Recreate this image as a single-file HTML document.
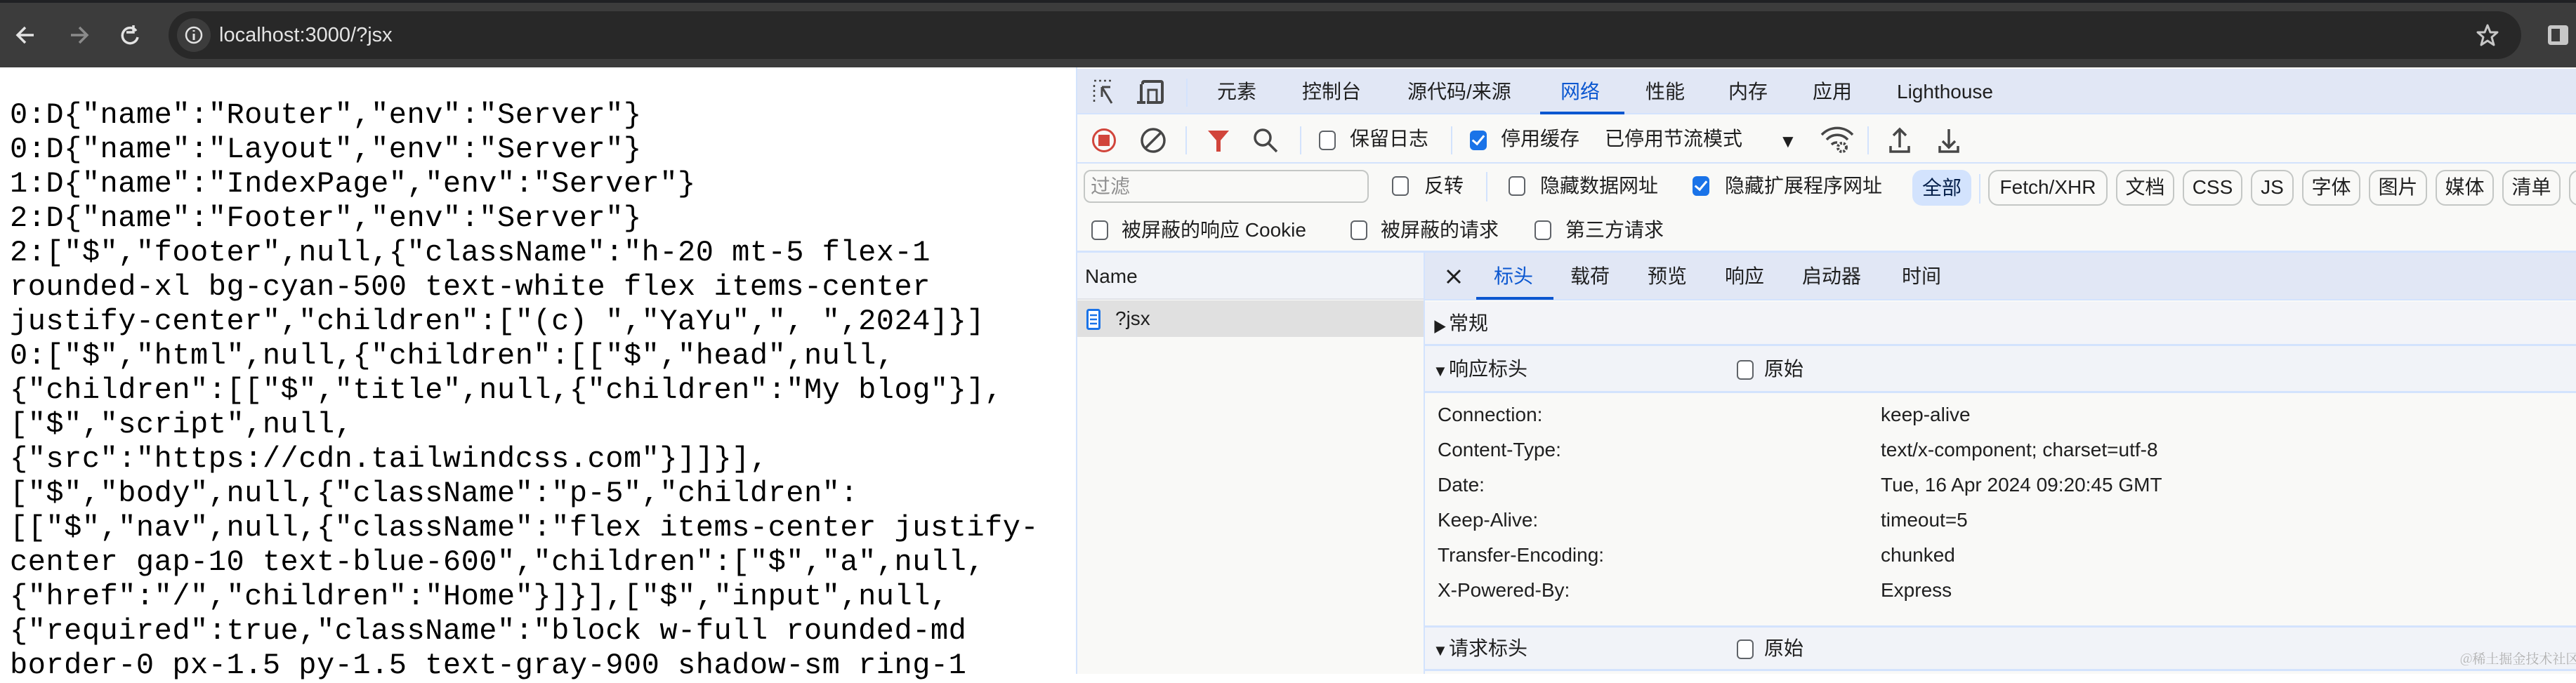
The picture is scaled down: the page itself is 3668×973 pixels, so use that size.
<!DOCTYPE html>
<html><head><meta charset="utf-8">
<style>
*{margin:0;padding:0;box-sizing:border-box}
body{width:3668px;height:960px;overflow:hidden;background:#fff;position:relative;font-family:"Liberation Sans","Noto Sans CJK SC",sans-serif}
.a{position:absolute;white-space:nowrap}
.ui{font-size:28px;color:#1f1f1f;line-height:1}
.cb{position:absolute;width:24px;height:28px;border:2.5px solid #5f6368;border-radius:6px;background:#fff}
.cbc{position:absolute;width:24px;height:28px;border-radius:6px;background:#1a73e8}
.cbc:after{content:"";position:absolute;left:7px;top:3px;width:7px;height:14px;border:solid #fff;border-width:0 3.5px 3.5px 0;transform:rotate(40deg)}
.btn{position:absolute;top:242px;height:51px;border:2.5px solid #c4c7c5;border-radius:14px;font-size:28px;line-height:46px;text-align:center;color:#1f1f1f}
.sep{position:absolute;width:2px;background:#d3e3fd}
pre{position:absolute;left:14px;top:140px;font-family:"Liberation Mono","DejaVu Sans Mono",monospace;font-size:42px;line-height:49px;color:#000;letter-spacing:0.5px}
</style></head><body>
<div class="a" style="left:0;top:0;width:3668px;height:4px;background:#202124"></div>
<div class="a" style="left:0;top:4px;width:3668px;height:92px;background:#3c3c3c"></div>
<svg class="a" style="left:20px;top:30px" width="190" height="40" viewBox="0 0 190 40">
<path d="M28 20H6M16 9L5 20l11 11" stroke="#e3e3e3" stroke-width="3.5" fill="none"/>
<path d="M81 20h22M93 9l11 11-11 11" stroke="#8b8b8b" stroke-width="3.5" fill="none"/>
<path d="M174 14a11 11 0 1 0 2 9" stroke="#e3e3e3" stroke-width="3.5" fill="none"/><path d="M170 6v10h-10" stroke="#e3e3e3" stroke-width="3.5" fill="none"/>
</svg>
<div class="a" style="left:240px;top:16px;width:3350px;height:68px;border-radius:34px;background:#282828"></div>
<div class="a" style="left:252px;top:26px;width:48px;height:48px;border-radius:24px;background:#3c3c3c"></div>
<svg class="a" style="left:262px;top:36px" width="28" height="28" viewBox="0 0 28 28"><circle cx="14" cy="14" r="11" stroke="#e3e3e3" stroke-width="2.5" fill="none"/><path d="M14 12v9M14 7v2" stroke="#e3e3e3" stroke-width="3"/></svg>
<div class="a" style="left:312px;top:33px;font-size:29px;color:#e3e3e3;line-height:34px">localhost:3000/?jsx</div>
<svg class="a" style="left:3525px;top:33px" width="34" height="34" viewBox="0 0 34 34"><path d="M17 3l4 10h10l-8 7 3 11-9-6-9 6 3-11-8-7h10z" stroke="#c7c7c7" stroke-width="3" fill="none" stroke-linejoin="round"/></svg>
<div class="a" style="left:3628px;top:36px;width:29px;height:28px;border-radius:4px;background:#c7c7c7"></div>
<div class="a" style="left:3633px;top:41px;width:12px;height:18px;background:#3c3c3c"></div>

<pre>0:D{"name":"Router","env":"Server"}
0:D{"name":"Layout","env":"Server"}
1:D{"name":"IndexPage","env":"Server"}
2:D{"name":"Footer","env":"Server"}
2:["$","footer",null,{"className":"h-20 mt-5 flex-1
rounded-xl bg-cyan-500 text-white flex items-center
justify-center","children":["(c) ","YaYu",", ",2024]}]
0:["$","html",null,{"children":[["$","head",null,
{"children":[["$","title",null,{"children":"My blog"}],
["$","script",null,
{"src":"https://cdn.tailwindcss.com"}]]}],
["$","body",null,{"className":"p-5","children":
[["$","nav",null,{"className":"flex items-center justify-
center gap-10 text-blue-600","children":["$","a",null,
{"href":"/","children":"Home"}]}],["$","input",null,
{"required":true,"className":"block w-full rounded-md
border-0 px-1.5 py-1.5 text-gray-900 shadow-sm ring-1</pre>

<div class="a" style="left:1532px;top:96px;width:2136px;height:864px;background:#f9f9f7;border-left:2px solid #d3e3fd"></div>
<div class="a" style="left:1534px;top:98px;width:2134px;height:65px;background:#e1e7f5;border-bottom:2px solid #d3e3fd"></div>
<svg class="a" style="left:1555px;top:112px" width="110" height="40" viewBox="0 0 110 40">
<path d="M3 3h3M10 3h3M17 3h3M24 3h3M3 9v3M3 16v3M3 23v3M3 30v3" stroke="#474747" stroke-width="2.5"/>
<path d="M14 12l14 23M14 12v14M14 12h12" stroke="#474747" stroke-width="3" fill="none"/>
<rect x="72" y="4" width="28" height="30" rx="2" stroke="#474747" stroke-width="4" fill="none"/><rect x="64" y="8" width="14" height="28" fill="#e1e7f5"/><path d="M70 8v26M64 34h12" stroke="#474747" stroke-width="4"/>
<path d="M80 16h12v18H80z" stroke="#474747" stroke-width="3" fill="none"/>
</svg>
<div class="sep" style="left:1689px;top:112px;height:40px"></div>
<div class="a ui" style="left:1733px;top:117px">元素</div>
<div class="a ui" style="left:1854px;top:117px">控制台</div>
<div class="a ui" style="left:2004px;top:117px">源代码/来源</div>
<div class="a ui" style="left:2222px;top:117px;color:#0b57d0">网络</div>
<div class="a" style="left:2193px;top:159px;width:120px;height:4px;background:#0b57d0"></div>
<div class="a ui" style="left:2343px;top:117px">性能</div>
<div class="a ui" style="left:2461px;top:117px">内存</div>
<div class="a ui" style="left:2581px;top:117px">应用</div>
<div class="a ui" style="left:2701px;top:117px">Lighthouse</div>

<div class="a" style="left:1534px;top:231px;width:2134px;height:2px;background:#d3e3fd"></div>
<svg class="a" style="left:1550px;top:178px" width="290" height="45" viewBox="0 0 290 45">
<circle cx="22" cy="22" r="15.5" stroke="#d1453b" stroke-width="3" fill="none"/><rect x="14" y="14" width="16" height="16" fill="#d1453b"/>
<circle cx="92" cy="22" r="16" stroke="#474747" stroke-width="3.5" fill="none"/><path d="M103 11L81 33" stroke="#474747" stroke-width="3.5"/>
<path d="M170 8h30l-12 14v16h-6V22z" fill="#d1453b"/>
<circle cx="248" cy="18" r="11" stroke="#474747" stroke-width="3.5" fill="none"/><path d="M256 26l12 12" stroke="#474747" stroke-width="3.5"/>
</svg>
<div class="sep" style="left:1688px;top:180px;height:40px"></div>
<div class="sep" style="left:1851px;top:180px;height:40px"></div>
<div class="cb" style="left:1878px;top:186px"></div>
<div class="a ui" style="left:1922px;top:184px">保留日志</div>
<div class="sep" style="left:2066px;top:180px;height:40px"></div>
<div class="cbc" style="left:2093px;top:186px"></div>
<div class="a ui" style="left:2137px;top:184px">停用缓存</div>
<div class="a ui" style="left:2285px;top:184px">已停用节流模式</div>
<div class="a" style="left:2533px;top:186px;font-size:26px;color:#1f1f1f">▼</div>
<svg class="a" style="left:2590px;top:178px" width="220" height="45" viewBox="0 0 220 45">
<path d="M4 14a30 30 0 0 1 44 0M11 21a20 20 0 0 1 30 0M18 28a10 10 0 0 1 8-3" stroke="#474747" stroke-width="3.5" fill="none"/>
<circle cx="33" cy="32" r="6" stroke="#474747" stroke-width="4" fill="none" stroke-dasharray="3 2"/>
<path d="M115 6v26M106 15l9-9 9 9M102 30v8h26v-8" stroke="#474747" stroke-width="3.5" fill="none"/>
<path d="M185 6v26M176 23l9 9 9-9M172 30v8h26v-8" stroke="#474747" stroke-width="3.5" fill="none"/>
</svg>
<div class="sep" style="left:2659px;top:180px;height:40px"></div>

<div class="a" style="left:1543px;top:242px;width:406px;height:47px;border:2.5px solid #c4c7c5;border-radius:10px;background:#f9f9f7"></div>
<div class="a ui" style="left:1553px;top:252px;color:#8f8f8f">过滤</div>
<div class="cb" style="left:1982px;top:251px"></div>
<div class="a ui" style="left:2028px;top:251px">反转</div>
<div class="sep" style="left:2116px;top:245px;height:42px"></div>
<div class="cb" style="left:2148px;top:251px"></div>
<div class="a ui" style="left:2193px;top:251px">隐藏数据网址</div>
<div class="cbc" style="left:2410px;top:251px"></div>
<div class="a ui" style="left:2456px;top:251px">隐藏扩展程序网址</div>
<div class="a" style="left:2723px;top:242px;width:84px;height:51px;border-radius:14px;background:#d3e3fd;font-size:28px;line-height:51px;text-align:center;color:#041e49">全部</div>
<div class="sep" style="left:2818px;top:248px;height:42px"></div>
<div class="btn" style="left:2831px;width:170px">Fetch/XHR</div>
<div class="btn" style="left:3013px;width:83px">文档</div>
<div class="btn" style="left:3108px;width:85px">CSS</div>
<div class="btn" style="left:3205px;width:61px">JS</div>
<div class="btn" style="left:3278px;width:83px">字体</div>
<div class="btn" style="left:3373px;width:83px">图片</div>
<div class="btn" style="left:3468px;width:83px">媒体</div>
<div class="btn" style="left:3563px;width:83px">清单</div>
<div class="btn" style="left:3658px;width:83px"></div>

<div class="cb" style="left:1554px;top:314px"></div>
<div class="a ui" style="left:1597px;top:314px">被屏蔽的响应 Cookie</div>
<div class="cb" style="left:1923px;top:314px"></div>
<div class="a ui" style="left:1966px;top:314px">被屏蔽的请求</div>
<div class="cb" style="left:2185px;top:314px"></div>
<div class="a ui" style="left:2229px;top:314px">第三方请求</div>
<div class="a" style="left:1534px;top:357px;width:2134px;height:3px;background:#d3e3fd"></div>

<div class="a" style="left:1534px;top:360px;width:493px;height:67px;background:#f1f3f8;border-bottom:2px solid #e1e3e8"></div>
<div class="a ui" style="left:1545px;top:380px">Name</div>
<div class="a" style="left:1534px;top:428px;width:493px;height:52px;background:#e0e0e0"></div>
<svg class="a" style="left:1547px;top:440px" width="20" height="30" viewBox="0 0 20 30"><rect x="1.5" y="1.5" width="17" height="27" rx="2" stroke="#1a73e8" stroke-width="3" fill="#fff"/><path d="M5 9h10M5 15h10M5 21h10" stroke="#1a73e8" stroke-width="2.5"/></svg>
<div class="a ui" style="left:1588px;top:440px">?jsx</div>

<div class="a" style="left:2027px;top:360px;width:2px;height:600px;background:#d3e3fd"></div>
<div class="a" style="left:2029px;top:360px;width:1639px;height:68px;background:#e1e7f5;border-bottom:2px solid #d3e3fd"></div>
<svg class="a" style="left:2058px;top:382px" width="24" height="24" viewBox="0 0 24 24"><path d="M3 3l18 18M21 3L3 21" stroke="#1f1f1f" stroke-width="3"/></svg>
<div class="a ui" style="left:2127px;top:380px;color:#0b57d0">标头</div>
<div class="a" style="left:2102px;top:423px;width:110px;height:4px;background:#0b57d0"></div>
<div class="a ui" style="left:2236px;top:380px">载荷</div>
<div class="a ui" style="left:2346px;top:380px">预览</div>
<div class="a ui" style="left:2456px;top:380px">响应</div>
<div class="a ui" style="left:2566px;top:380px">启动器</div>
<div class="a ui" style="left:2708px;top:380px">时间</div>

<div class="a" style="left:2029px;top:430px;width:1639px;height:63px;background:#f3f4f8;border-bottom:3px solid #d3e3fd"></div>
<div class="a" style="left:2040px;top:450px;font-size:20px;color:#1f1f1f">▶</div>
<div class="a ui" style="left:2063px;top:447px">常规</div>

<div class="a" style="left:2029px;top:493px;width:1639px;height:67px;background:#f1f3f8;border-bottom:3px solid #d3e3fd"></div>
<div class="a" style="left:2040px;top:516px;font-size:22px;color:#1f1f1f">▼</div>
<div class="a ui" style="left:2063px;top:512px">响应标头</div>
<div class="cb" style="left:2473px;top:513px"></div>
<div class="a ui" style="left:2512px;top:512px">原始</div>

<div class="a ui" style="left:2047px;top:577px">Connection:</div><div class="a ui" style="left:2678px;top:577px">keep-alive</div>
<div class="a ui" style="left:2047px;top:627px">Content-Type:</div><div class="a ui" style="left:2678px;top:627px">text/x-component; charset=utf-8</div>
<div class="a ui" style="left:2047px;top:677px">Date:</div><div class="a ui" style="left:2678px;top:677px">Tue, 16 Apr 2024 09:20:45 GMT</div>
<div class="a ui" style="left:2047px;top:727px">Keep-Alive:</div><div class="a ui" style="left:2678px;top:727px">timeout=5</div>
<div class="a ui" style="left:2047px;top:777px">Transfer-Encoding:</div><div class="a ui" style="left:2678px;top:777px">chunked</div>
<div class="a ui" style="left:2047px;top:827px">X-Powered-By:</div><div class="a ui" style="left:2678px;top:827px">Express</div>

<div class="a" style="left:2029px;top:891px;width:1639px;height:65px;background:#f1f3f8;border-top:3px solid #d3e3fd;border-bottom:3px solid #d3e3fd"></div>
<div class="a" style="left:2040px;top:914px;font-size:22px;color:#1f1f1f">▼</div>
<div class="a ui" style="left:2063px;top:910px">请求标头</div>
<div class="cb" style="left:2473px;top:911px"></div>
<div class="a ui" style="left:2512px;top:910px">原始</div>
<div class="a" style="left:3503px;top:924px;font-size:19px;color:#b0b0b0;font-family:'Noto Serif CJK SC','Liberation Serif',serif">@稀土掘金技术社区</div>
</body></html>
